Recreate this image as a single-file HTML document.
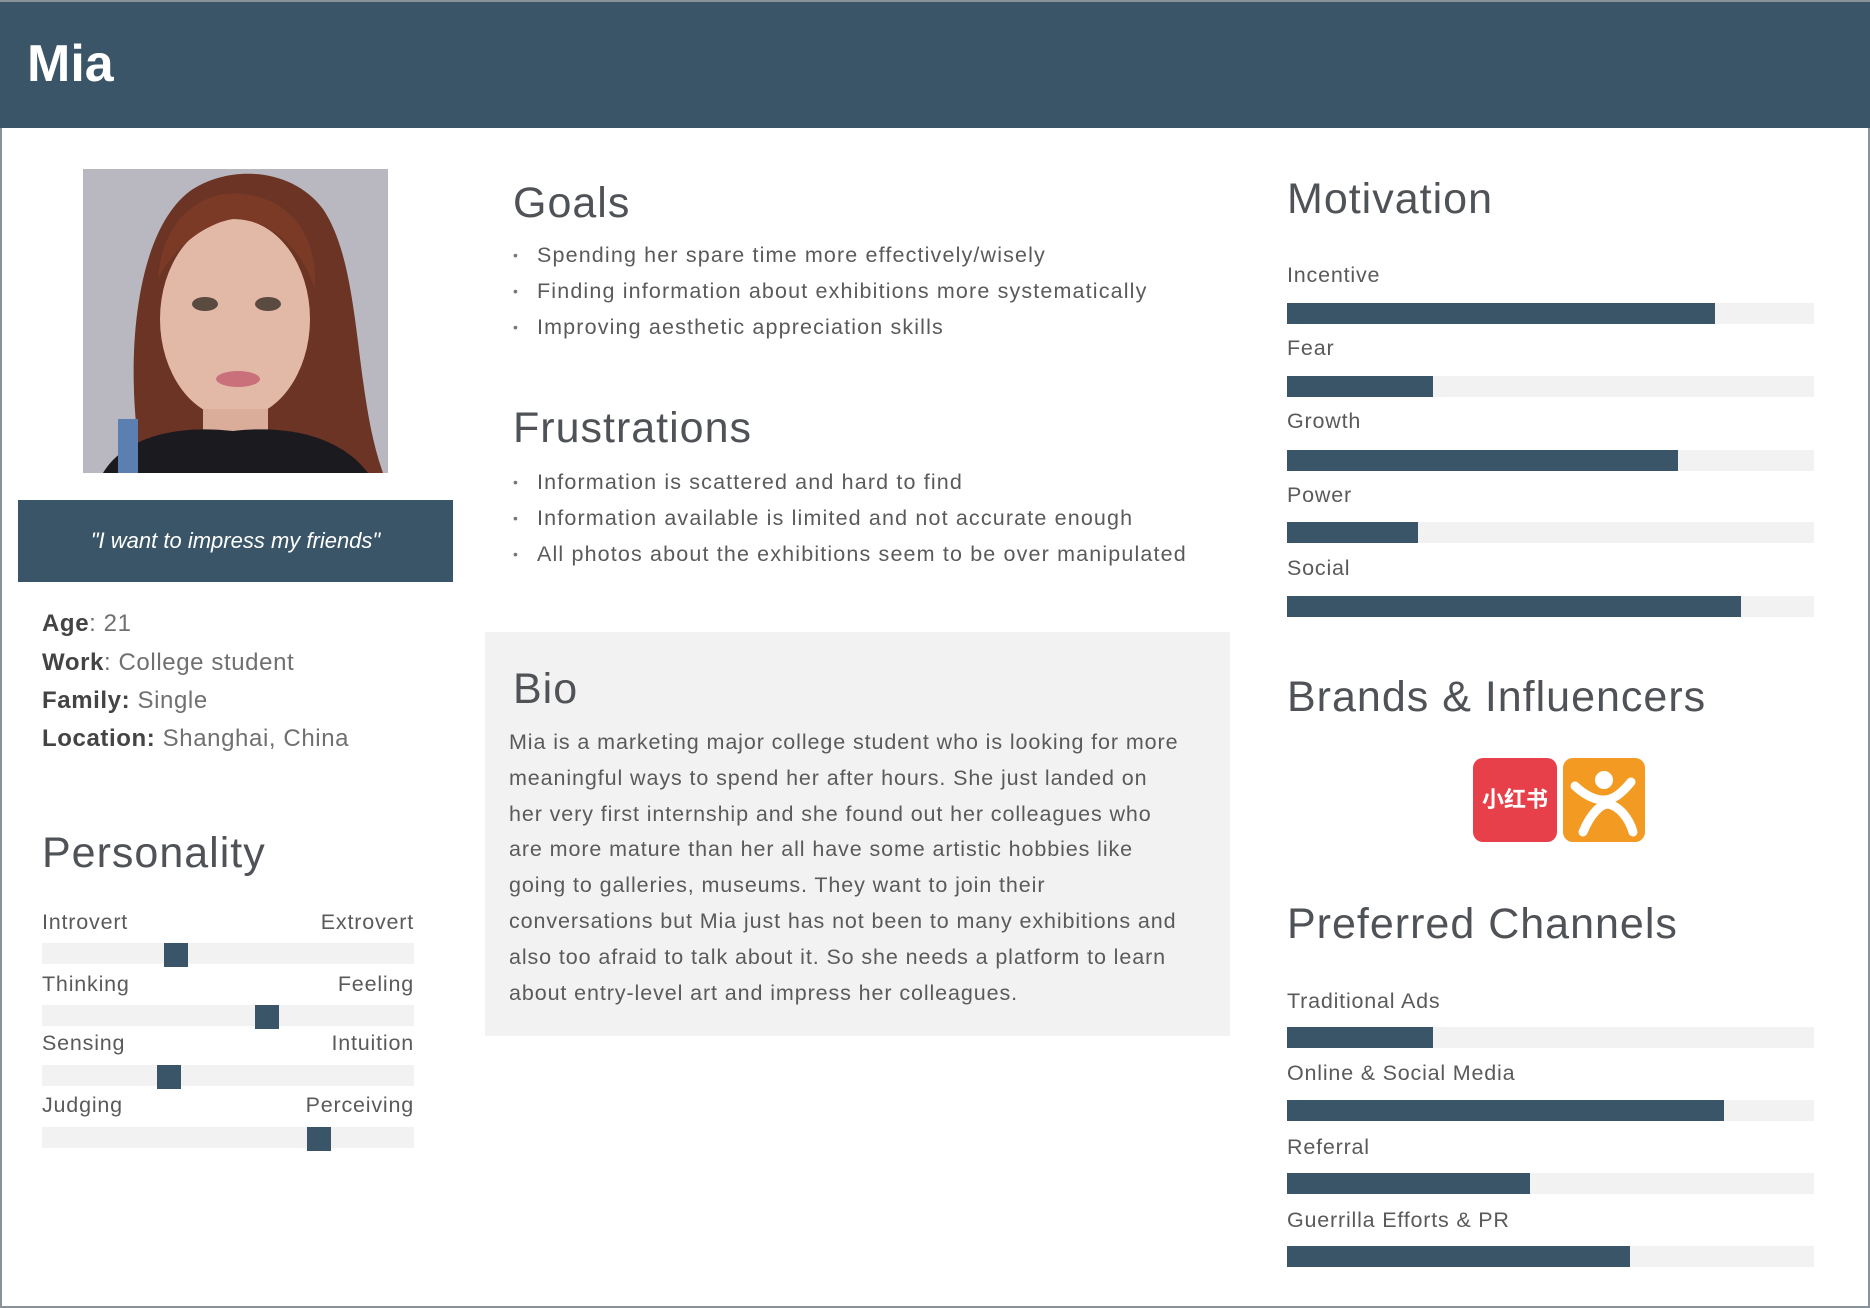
<!DOCTYPE html>
<html><head><meta charset="utf-8"><style>
*{margin:0;padding:0;box-sizing:border-box}
body{width:1870px;height:1308px;position:relative;overflow:hidden;background:#fff;font-family:"Liberation Sans",Arial,sans-serif;color:#555}
.a{position:absolute;white-space:nowrap}
.hd{position:absolute;left:0;top:2px;width:1870px;height:126px;background:#3a5567}
.h2{font-size:43px;color:#4f5256;line-height:50px;height:50px;letter-spacing:1px}
.t{font-size:21.5px;line-height:30px;height:30px;color:#5a5a5a;letter-spacing:0.8px}
.bar{position:absolute;height:21px;background:#f2f2f2}
.bar i{position:absolute;left:0;top:0;height:21px;background:#3a5567}
.mk{position:absolute;width:24px;height:24px;background:#3a5567}
.b{font-size:24px;line-height:34px;height:34px;color:#707070;letter-spacing:0.6px}
.b b{color:#444;font-weight:600}
ul{list-style:none}
.bl{font-size:21.5px;line-height:36px;color:#5a5a5a;letter-spacing:1.15px}
.bl li:before{content:"•";font-size:14px;position:absolute;margin-left:-24px;color:#777}
</style></head><body>
<div class="a" style="left:0;top:0;width:2px;height:1308px;background:#8a9299"></div>
<div class="a" style="right:0;top:0;width:2px;height:1308px;background:#8a9299"></div>
<div class="a" style="left:0;bottom:0;width:1870px;height:2px;background:#8a9299"></div>
<div class="a" style="left:0;top:0;width:1870px;height:2px;background:#8a9299"></div>
<div class="hd"></div>
<div class="a" style="left:27px;top:34px;font-size:52px;font-weight:bold;color:#fff;line-height:60px">Mia</div>

<svg class="a" style="left:83px;top:169px" width="305" height="304" viewBox="0 0 305 304">
<rect width="305" height="304" fill="#b9b8c0"/>
<path d="M60 304 C40 200 50 60 110 20 C150 -5 210 0 240 40 C280 100 270 220 300 304Z" fill="#6b3424"/>
<ellipse cx="152" cy="150" rx="75" ry="100" fill="#e2b9a6"/>
<path d="M75 110 C80 40 130 20 160 25 C210 30 235 70 232 120 C215 70 180 50 150 50 C120 55 90 80 75 110Z" fill="#7a3a26"/>
<rect x="120" y="240" width="65" height="30" fill="#d9ad99"/>
<path d="M20 304 C40 270 90 255 150 262 C210 255 260 270 285 304Z" fill="#1a1a1f"/>
<rect x="35" y="250" width="20" height="54" fill="#5a7fb0"/>
<ellipse cx="122" cy="135" rx="13" ry="7" fill="#5a4a40"/><ellipse cx="185" cy="135" rx="13" ry="7" fill="#5a4a40"/>
<ellipse cx="155" cy="210" rx="22" ry="8" fill="#c9707a"/>
</svg>

<div class="a" style="left:18px;top:500px;width:435px;height:82px;background:#3a5567;color:#fff;font-style:italic;font-size:22px;line-height:82px;text-align:center">"I want to impress my friends"</div>

<div class="a b" style="left:42px;top:607px"><b>Age</b>: 21</div>
<div class="a b" style="left:42px;top:646px"><b>Work</b>: College student</div>
<div class="a b" style="left:42px;top:684px"><b>Family:</b> Single</div>
<div class="a b" style="left:42px;top:722px"><b>Location:</b> Shanghai, China</div>

<div class="a h2" style="left:42px;top:828px">Personality</div>
<div class="a t" style="left:42px;top:907px">Introvert</div><div class="a t" style="left:42px;top:907px;width:372px;text-align:right">Extrovert</div>
<div class="bar" style="left:42px;top:943px;width:372px"></div><div class="mk" style="left:164px;top:943px"></div>
<div class="a t" style="left:42px;top:969px">Thinking</div><div class="a t" style="left:42px;top:969px;width:372px;text-align:right">Feeling</div>
<div class="bar" style="left:42px;top:1005px;width:372px"></div><div class="mk" style="left:255px;top:1005px"></div>
<div class="a t" style="left:42px;top:1028px">Sensing</div><div class="a t" style="left:42px;top:1028px;width:372px;text-align:right">Intuition</div>
<div class="bar" style="left:42px;top:1065px;width:372px"></div><div class="mk" style="left:157px;top:1065px"></div>
<div class="a t" style="left:42px;top:1090px">Judging</div><div class="a t" style="left:42px;top:1090px;width:372px;text-align:right">Perceiving</div>
<div class="bar" style="left:42px;top:1127px;width:372px"></div><div class="mk" style="left:307px;top:1127px"></div>

<div class="a h2" style="left:513px;top:178px">Goals</div>
<ul class="a bl" style="left:537px;top:237px"><li>Spending her spare time more effectively/wisely</li><li>Finding information about exhibitions more systematically</li><li>Improving aesthetic appreciation skills</li></ul>
<div class="a h2" style="left:513px;top:403px">Frustrations</div>
<ul class="a bl" style="left:537px;top:464px"><li>Information is scattered and hard to find</li><li>Information available is limited and not accurate enough</li><li>All photos about the exhibitions seem to be over manipulated</li></ul>

<div class="a" style="left:485px;top:632px;width:745px;height:404px;background:#f2f2f2"></div>
<div class="a h2" style="left:513px;top:664px">Bio</div>
<div class="a" style="left:509px;top:725px;font-size:21.5px;line-height:35.8px;color:#5a5a5a;letter-spacing:0.9px">Mia is a marketing major college student who is looking for more<br>meaningful ways to spend her after hours. She just landed on<br>her very first internship and she found out her colleagues who<br>are more mature than her all have some artistic hobbies like<br>going to galleries, museums. They want to join their<br>conversations but Mia just has not been to many exhibitions and<br>also too afraid to talk about it. So she needs a platform to learn<br>about entry-level art and impress her colleagues.</div>

<div class="a h2" style="left:1287px;top:174px">Motivation</div>
<div class="a t" style="left:1287px;top:260px">Incentive</div><div class="bar" style="left:1287px;top:303px;width:527px"><i style="width:428px"></i></div>
<div class="a t" style="left:1287px;top:333px">Fear</div><div class="bar" style="left:1287px;top:376px;width:527px"><i style="width:146px"></i></div>
<div class="a t" style="left:1287px;top:406px">Growth</div><div class="bar" style="left:1287px;top:450px;width:527px"><i style="width:391px"></i></div>
<div class="a t" style="left:1287px;top:480px">Power</div><div class="bar" style="left:1287px;top:522px;width:527px"><i style="width:131px"></i></div>
<div class="a t" style="left:1287px;top:553px">Social</div><div class="bar" style="left:1287px;top:596px;width:527px"><i style="width:454px"></i></div>

<div class="a h2" style="left:1287px;top:672px">Brands &amp; Influencers</div>
<div class="a" style="left:1473px;top:758px;width:84px;height:84px;border-radius:10px;background:#e8404a;color:#fff;font-family:'Liberation Sans','Noto Sans CJK SC',sans-serif;font-weight:bold;font-size:22px;line-height:84px;text-align:center">小红书</div>
<svg class="a" style="left:1563px;top:758px" width="82" height="84" viewBox="0 0 82 84"><rect width="82" height="84" rx="10" fill="#f29a22"/><circle cx="41" cy="22" r="9" fill="#fff"/><path d="M12 28 C25 40 35 42 41 42 C50 42 58 36 68 24" stroke="#fff" stroke-width="9" fill="none" stroke-linecap="round"/><path d="M20 74 C28 55 38 46 45 46 C56 48 66 60 70 74" stroke="#fff" stroke-width="9" fill="none" stroke-linecap="round"/></svg>

<div class="a h2" style="left:1287px;top:899px">Preferred Channels</div>
<div class="a t" style="left:1287px;top:986px">Traditional Ads</div><div class="bar" style="left:1287px;top:1027px;width:527px"><i style="width:146px"></i></div>
<div class="a t" style="left:1287px;top:1058px">Online &amp; Social Media</div><div class="bar" style="left:1287px;top:1100px;width:527px"><i style="width:437px"></i></div>
<div class="a t" style="left:1287px;top:1132px">Referral</div><div class="bar" style="left:1287px;top:1173px;width:527px"><i style="width:243px"></i></div>
<div class="a t" style="left:1287px;top:1205px">Guerrilla Efforts &amp; PR</div><div class="bar" style="left:1287px;top:1246px;width:527px"><i style="width:343px"></i></div>
</body></html>
